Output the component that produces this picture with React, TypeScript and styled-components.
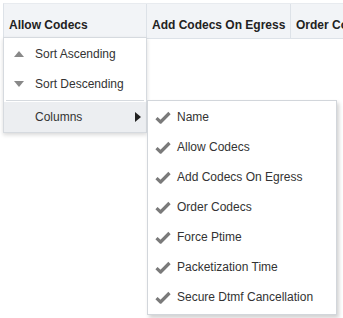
import React from 'react'
import styled, { createGlobalStyle } from 'styled-components'

const GlobalStyle = createGlobalStyle`
  html, body {
    margin: 0;
    padding: 0;
    background: #fff;
    font-family: "Liberation Sans", Arial, sans-serif;
    color: #333;
  }
`

const Page = styled.div`
  position: relative;
  width: 343px;
  height: 318px;
  overflow: hidden;
  background: #fff;
`

const HeaderRow = styled.div`
  display: flex;
  margin: 3px 0 0 3px;
  height: 34px;
  background: #f2f4f7;
  border-left: 1px solid #dde2e8;
  border-top: 1px solid #e8ebef;
  border-bottom: 1px solid #dde2e8;
`

const HeaderCell = styled.div<{ $w: number }>`
  flex: 0 0 ${(p) => p.$w}px;
  display: flex;
  align-items: flex-end;
  padding: 0 0 6px 5px;
  box-sizing: border-box;
  border-right: 1px solid #dde2e8;
  font-weight: bold;
  font-size: 12px;
  color: #222;
  white-space: nowrap;
  overflow: hidden;
`

const Menu = styled.div`
  position: absolute;
  left: 3px;
  top: 37px;
  width: 144px;
  padding-top: 1px;
  background: #fff;
  border: 1px solid #d6dadf;
  box-shadow: 0 2px 4px rgba(0, 0, 0, 0.15);
  box-sizing: border-box;
`

const MenuItem = styled.div<{ $active?: boolean }>`
  display: flex;
  align-items: center;
  height: 30px;
  padding-left: 10px;
  font-size: 12px;
  color: #333;
  background: ${(p) => (p.$active ? '#eceef1' : 'transparent')};
`

const IconSlot = styled.span`
  width: 21px;
  display: flex;
  align-items: center;
`

const Label = styled.span`
  flex: 1;
  white-space: nowrap;
`

const ArrowSlot = styled.span`
  display: flex;
  margin-right: 5px;
`

const Divider = styled.div`
  height: 1px;
  background: #d6dadf;
  margin: 1px 2px 1px;
`

const SubMenu = styled.div`
  position: absolute;
  left: 147px;
  top: 100px;
  width: 190px;
  padding: 1px 0 2px;
  background: #fff;
  border: 1px solid #d2d6db;
  box-shadow: 2px 3px 4px rgba(0, 0, 0, 0.18);
  box-sizing: border-box;
`

const SubItem = styled.div`
  display: flex;
  align-items: center;
  height: 30px;
  padding-left: 7px;
  font-size: 12px;
  color: #333;
  white-space: nowrap;
`

const CheckSlot = styled.span`
  width: 22px;
  display: flex;
  align-items: center;
`

const Triangle = ({ up }: { up: boolean }) => (
  <svg width="10" height="6" viewBox="0 0 10 6">
    <polygon points={up ? '5,0 10,6 0,6' : '0,0 10,0 5,6'} fill="#888" />
  </svg>
)

const Arrow = () => (
  <svg width="6" height="10" viewBox="0 0 6 10">
    <polygon points="0,0 6,5 0,10" fill="#222" />
  </svg>
)

const Check = () => (
  <svg width="16" height="13" viewBox="0 0 16 13">
    <path d="M1.5 7.2 L5.6 11 L14.5 2" fill="none" stroke="#7a7a7a" strokeWidth="3.2" strokeLinejoin="round" />
  </svg>
)

const columns = [
  'Name',
  'Allow Codecs',
  'Add Codecs On Egress',
  'Order Codecs',
  'Force Ptime',
  'Packetization Time',
  'Secure Dtmf Cancellation',
]

export default function App() {
  return (
    <Page>
      <GlobalStyle />
      <HeaderRow>
        <HeaderCell $w={143}>Allow Codecs</HeaderCell>
        <HeaderCell $w={144}>Add Codecs On Egress</HeaderCell>
        <HeaderCell $w={100}>Order Codecs</HeaderCell>
      </HeaderRow>
      <Menu>
        <MenuItem>
          <IconSlot>
            <Triangle up />
          </IconSlot>
          <Label>Sort Ascending</Label>
        </MenuItem>
        <MenuItem>
          <IconSlot>
            <Triangle up={false} />
          </IconSlot>
          <Label>Sort Descending</Label>
        </MenuItem>
        <Divider />
        <MenuItem $active>
          <IconSlot />
          <Label>Columns</Label>
          <ArrowSlot>
            <Arrow />
          </ArrowSlot>
        </MenuItem>
      </Menu>
      <SubMenu>
        {columns.map((c) => (
          <SubItem key={c}>
            <CheckSlot>
              <Check />
            </CheckSlot>
            {c}
          </SubItem>
        ))}
      </SubMenu>
    </Page>
  )
}
